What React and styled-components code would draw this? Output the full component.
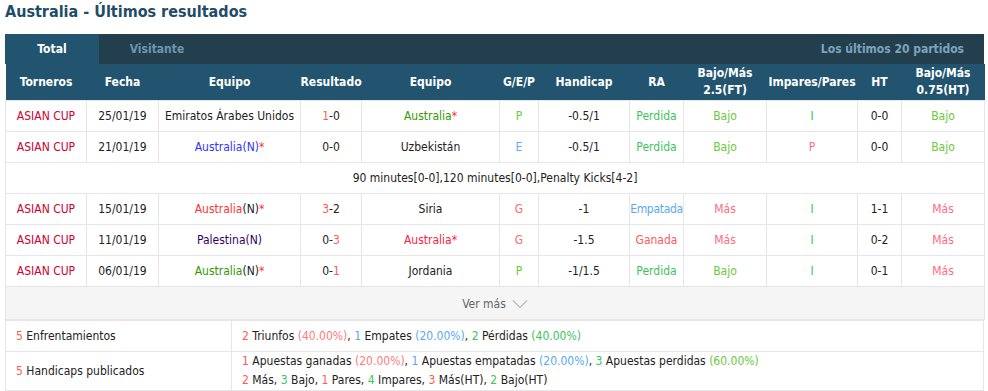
import React from "react";
import styled, { createGlobalStyle } from "styled-components";

const Global = createGlobalStyle`
  body {
    margin: 0;
    background: #fff;
    font-family: "DejaVu Sans Condensed", "DejaVu Sans", sans-serif;
    font-size: 12px;
    color: #222;
  }
`;

const Page = styled.div`
  padding: 0 4px 0 5px;
`;

const Title = styled.h2`
  margin: 0;
  height: 34px;
  line-height: 23px;
  font-size: 16px;
  font-weight: bold;
  color: #1f4d68;
`;

const TabBar = styled.div`
  display: flex;
  align-items: stretch;
  height: 30px;
  background: #233f4e;
  width: 979px;
`;

const Tab = styled.div`
  display: flex;
  align-items: center;
  justify-content: center;
  width: ${p => p.w}px;
  font-weight: bold;
  color: ${p => (p.active ? "#fff" : "#6e95af")};
  background: ${p => (p.active ? "#22546f" : "transparent")};
`;

const TabInfo = styled.div`
  margin-left: auto;
  display: flex;
  align-items: center;
  padding-right: 20px;
  font-weight: bold;
  color: #7ea3bb;
`;

const Table = styled.table`
  width: 979px;
  border-collapse: collapse;
  table-layout: fixed;
`;

const Th = styled.th`
  background: #22546f;
  color: #fff;
  font-weight: bold;
  height: 36px;
  padding: 0;
  line-height: 17px;
  text-align: center;
`;

const Td = styled.td`
  border: 1px solid #e6e6e6;
  height: 30px;
  padding: 0;
  text-align: center;
  color: ${p => p.c || "#222"};
  white-space: nowrap;
  letter-spacing: ${p => (p.tight ? "-0.3px" : "normal")};
`;

const C = styled.span`
  color: ${p => p.c};
`;

const MoreCell = styled.td`
  border: 1px solid #e6e6e6;
  background: #f5f5f5;
  height: 32px;
  padding: 0;
  text-align: center;
  color: #666;
`;

const More = styled.span`
  display: inline-flex;
  align-items: center;
  gap: 6px;
  padding-top: 2px;
`;

const SumTd = styled.td`
  border: 1px solid #e6e6e6;
  height: ${p => p.h || 30}px;
  padding: 0 0 0 10px;
  text-align: left;
  line-height: 19px;
`;

const RED = "#ff5a5a";
const BLUE = "#5aa9ef";
const GREEN = "#3cc35a";
const CUP = "#cc0033";
const LIME = "#6ac93a";
const PINK = "#ff6b7f";

const cols = [81, 72, 142, 61, 138, 39, 91, 54, 83, 91, 44, 83];

const gepColor = { P: "#6ac93a", E: "#66aaff", G: "#ff6b6b" };
const raColor = { Perdida: GREEN, Empatada: BLUE, Ganada: "#ff5a5a" };
const bmColor = { Bajo: LIME, "Más": PINK };
const ipColor = { I: GREEN, P: PINK };

const rows = [
  {
    date: "25/01/19",
    home: [["Emiratos Árabes Unidos", "#222"]],
    score: [["1", RED], ["-0", "#222"]],
    away: [["Australia", "#339900"], ["*", "#ff3333"]],
    gep: "P", hc: "-0.5/1", ra: "Perdida", bm: "Bajo", ip: "I", ht: "0-0", bm2: "Bajo",
  },
  {
    date: "21/01/19",
    home: [["Australia", "#3333ff"], ["(N)", "#3333ff"], ["*", "#ff3333"]],
    score: [["0-0", "#222"]],
    away: [["Uzbekistán", "#222"]],
    gep: "E", hc: "-0.5/1", ra: "Perdida", bm: "Bajo", ip: "P", ht: "0-0", bm2: "Bajo",
    note: "90 minutes[0-0],120 minutes[0-0],Penalty Kicks[4-2]",
  },
  {
    date: "15/01/19",
    home: [["Australia", "#ff3333"], ["(N)", "#222"], ["*", "#ff3333"]],
    score: [["3", RED], ["-2", "#222"]],
    away: [["Siria", "#222"]],
    gep: "G", hc: "-1", ra: "Empatada", bm: "Más", ip: "I", ht: "1-1", bm2: "Más",
  },
  {
    date: "11/01/19",
    home: [["Palestina(N)", "#330066"]],
    score: [["0-", "#222"], ["3", RED]],
    away: [["Australia*", "#ff2244"]],
    gep: "G", hc: "-1.5", ra: "Ganada", bm: "Más", ip: "I", ht: "0-2", bm2: "Más",
  },
  {
    date: "06/01/19",
    home: [["Australia", "#339900"], ["(N)", "#222"], ["*", "#ff3333"]],
    score: [["0-", "#222"], ["1", RED]],
    away: [["Jordania", "#222"]],
    gep: "P", hc: "-1/1.5", ra: "Perdida", bm: "Bajo", ip: "I", ht: "0-1", bm2: "Más",
  },
];

const Parts = ({ parts }) => parts.map(([t, c], i) => <C key={i} c={c}>{t}</C>);

function Chevron() {
  return (
    <svg width="16" height="10" viewBox="0 0 16 10">
      <path d="M1 1.5 L8 8.5 L15 1.5" fill="none" stroke="#bbb" strokeWidth="1.2" />
    </svg>
  );
}

function App() {
  return (
    <Page>
      <Global />
      <Title>Australia - Últimos resultados</Title>
      <TabBar>
        <Tab active w={94}>Total</Tab>
        <Tab w={116}>Visitante</Tab>
        <TabInfo>Los últimos 20 partidos</TabInfo>
      </TabBar>
      <Table>
        <colgroup>
          {cols.map((w, i) => <col key={i} style={{ width: w }} />)}
        </colgroup>
        <thead>
          <tr>
            <Th>Torneros</Th>
            <Th>Fecha</Th>
            <Th>Equipo</Th>
            <Th>Resultado</Th>
            <Th>Equipo</Th>
            <Th>G/E/P</Th>
            <Th>Handicap</Th>
            <Th>RA</Th>
            <Th>Bajo/Más<br />2.5(FT)</Th>
            <Th>Impares/Pares</Th>
            <Th>HT</Th>
            <Th>Bajo/Más<br />0.75(HT)</Th>
          </tr>
        </thead>
        <tbody>
          {rows.map((r, i) => (
            <React.Fragment key={i}>
              <tr>
                <Td c={CUP}>ASIAN CUP</Td>
                <Td>{r.date}</Td>
                <Td><Parts parts={r.home} /></Td>
                <Td><Parts parts={r.score} /></Td>
                <Td><Parts parts={r.away} /></Td>
                <Td c={gepColor[r.gep]}>{r.gep}</Td>
                <Td>{r.hc}</Td>
                <Td c={raColor[r.ra]} tight={r.ra === "Empatada"}>{r.ra}</Td>
                <Td c={bmColor[r.bm]}>{r.bm}</Td>
                <Td c={ipColor[r.ip]}>{r.ip}</Td>
                <Td>{r.ht}</Td>
                <Td c={bmColor[r.bm2]}>{r.bm2}</Td>
              </tr>
              {r.note && (
                <tr>
                  <Td colSpan={12}>{r.note}</Td>
                </tr>
              )}
            </React.Fragment>
          ))}
          <tr>
            <MoreCell colSpan={12}>
              <More>Ver más <Chevron /></More>
            </MoreCell>
          </tr>
        </tbody>
      </Table>
      <Table>
        <colgroup>
          <col style={{ width: 226 }} />
          <col />
        </colgroup>
        <tbody>
          <tr>
            <SumTd><C c={RED}>5</C> Enfrentamientos</SumTd>
            <SumTd>
              <C c={RED}>2</C> Triunfos <C c="#ff7b7b">(40.00%)</C>, <C c={BLUE}>1</C> Empates{" "}
              <C c={BLUE}>(20.00%)</C>, <C c={GREEN}>2</C> Pérdidas <C c={GREEN}>(40.00%)</C>
            </SumTd>
          </tr>
          <tr>
            <SumTd h={37}><C c={RED}>5</C> Handicaps publicados</SumTd>
            <SumTd h={37}>
              <C c={RED}>1</C> Apuestas ganadas <C c="#ff7b7b">(20.00%)</C>, <C c={BLUE}>1</C> Apuestas empatadas{" "}
              <C c={BLUE}>(20.00%)</C>, <C c={GREEN}>3</C> Apuestas perdidas <C c={LIME}>(60.00%)</C>
              <br />
              <C c={RED}>2</C> Más, <C c={GREEN}>3</C> Bajo, <C c={RED}>1</C> Pares, <C c={GREEN}>4</C> Impares,{" "}
              <C c={RED}>3</C> Más(HT), <C c={GREEN}>2</C> Bajo(HT)
            </SumTd>
          </tr>
        </tbody>
      </Table>
    </Page>
  );
}

export default App;
